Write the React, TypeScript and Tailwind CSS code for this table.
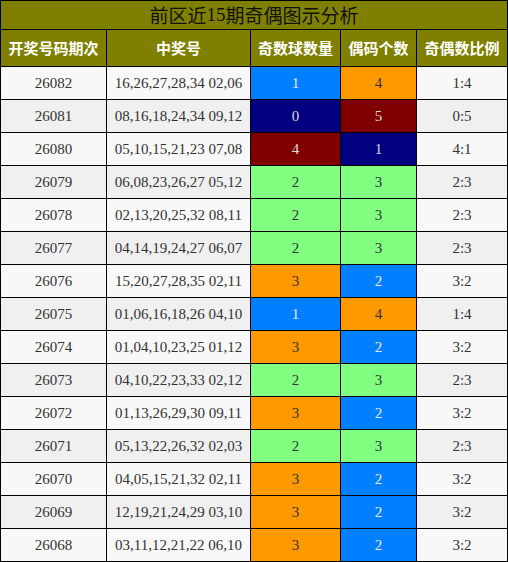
import React from "react";

type Pat = "14" | "05" | "41" | "23" | "32";

const rows: [string, string, Pat][] = [
  ["26082", "16,26,27,28,34 02,06", "14"],
  ["26081", "08,16,18,24,34 09,12", "05"],
  ["26080", "05,10,15,21,23 07,08", "41"],
  ["26079", "06,08,23,26,27 05,12", "23"],
  ["26078", "02,13,20,25,32 08,11", "23"],
  ["26077", "04,14,19,24,27 06,07", "23"],
  ["26076", "15,20,27,28,35 02,11", "32"],
  ["26075", "01,06,16,18,26 04,10", "14"],
  ["26074", "01,04,10,23,25 01,12", "32"],
  ["26073", "04,10,22,23,33 02,12", "23"],
  ["26072", "01,13,26,29,30 09,11", "32"],
  ["26071", "05,13,22,26,32 02,03", "23"],
  ["26070", "04,05,15,21,32 02,11", "32"],
  ["26069", "12,19,21,24,29 03,10", "32"],
  ["26068", "03,11,12,21,22 06,10", "32"],
];

const cellStyles: Record<Pat, [string, string]> = {
  "14": ["bg-[#0080ff] text-[#e8e8e8]", "bg-[#ff9900] text-[#333333]"],
  "05": ["bg-[#000080] text-[#dddddd]", "bg-[#800000] text-[#dddddd]"],
  "41": ["bg-[#800000] text-[#dddddd]", "bg-[#000080] text-[#dddddd]"],
  "23": ["bg-[#80ff80] text-[#333333]", "bg-[#80ff80] text-[#333333]"],
  "32": ["bg-[#ff9900] text-[#333333]", "bg-[#0080ff] text-[#e8e8e8]"],
};

const serif = "font-['Liberation_Serif','Noto_Sans_CJK_SC',serif]";
const cjk = "font-['Noto_Sans_CJK_SC','Liberation_Sans',sans-serif]";

export default function App() {
  return (
    <div className="w-[508px] bg-black p-px grid gap-px grid-cols-[105px_143px_89px_75px_90px]">
      <div className={`col-span-5 h-[28px] bg-[#808000] flex items-center justify-center text-[19px] text-[#111111] ${cjk}`}>
        前区近<span className={serif}>15</span>期奇偶图示分析
      </div>
      {["开奖号码期次", "中奖号", "奇数球数量", "偶码个数", "奇偶数比例"].map((h) => (
        <div
          key={h}
          className={`h-[36px] bg-[#808000] flex items-center justify-center text-white font-bold text-[15px] ${cjk}`}
        >
          {h}
        </div>
      ))}
      {rows.map(([id, nums, p], i) => {
        const bg = i % 2 === 0 ? "bg-[#f8f8f8]" : "bg-[#f0f0f0]";
        const [c3, c4] = cellStyles[p];
        const base = `h-[32px] flex items-center justify-center text-[15px] ${serif}`;
        return (
          <React.Fragment key={id}>
            <div className={`${base} ${bg} text-[#333333]`}>{id}</div>
            <div className={`${base} ${bg} text-[#333333]`}>{nums}</div>
            <div className={`${base} ${c3}`}>{p[0]}</div>
            <div className={`${base} ${c4}`}>{p[1]}</div>
            <div className={`${base} ${bg} text-[#333333]`}>
              {p[0]}:{p[1]}
            </div>
          </React.Fragment>
        );
      })}
    </div>
  );
}
